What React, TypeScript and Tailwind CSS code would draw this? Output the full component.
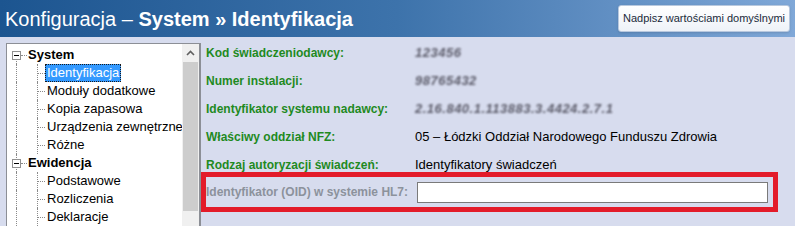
import React from "react";

type TreeGroup = {
  label: string;
  children: string[];
  selected?: string;
};

const tree: TreeGroup[] = [
  {
    label: "System",
    children: ["Identyfikacja", "Moduły dodatkowe", "Kopia zapasowa", "Urządzenia zewnętrzne", "Różne"],
    selected: "Identyfikacja",
  },
  {
    label: "Ewidencja",
    children: ["Podstawowe", "Rozliczenia", "Deklaracje"],
  },
];

const fields = [
  { label: "Kod świadczeniodawcy:", blurred: "123456" },
  { label: "Numer instalacji:", blurred: "98765432" },
  { label: "Identyfikator systemu nadawcy:", blurred: "2.16.840.1.113883.3.4424.2.7.1" },
  { label: "Właściwy oddział NFZ:", value: "05 – Łódzki Oddział Narodowego Funduszu Zdrowia" },
  { label: "Rodzaj autoryzacji świadczeń:", value: "Identyfikatory świadczeń" },
];

function RootRow({ label, first }: { label: string; first?: boolean }) {
  return (
    <div className="flex h-[18px] items-center">
      <div className="relative h-full w-[21px] shrink-0">
        <div
          className={
            first
              ? "absolute left-[9px] top-[9px] bottom-0 border-l border-dotted border-[#8a8a8a]"
              : "absolute left-[9px] top-0 bottom-0 border-l border-dotted border-[#8a8a8a]"
          }
        />
        <div className="absolute left-[14px] top-[9px] w-[6px] border-t border-dotted border-[#8a8a8a]" />
        <div className="absolute left-[5px] top-[5px] flex size-[9px] items-center justify-center border border-[#919191] bg-white">
          <div className="h-px w-[5px] bg-black" />
        </div>
      </div>
      <span className="whitespace-nowrap text-[13px] font-bold text-black">{label}</span>
    </div>
  );
}

function ChildRow({ label, selected }: { label: string; selected?: boolean }) {
  return (
    <div className="flex h-[18px] items-center">
      <div className="h-full w-[30px] shrink-0 pl-[9px]">
        <div className="h-full border-l border-dotted border-[#8a8a8a]" />
      </div>
      <div className="relative h-full w-[8px] shrink-0">
        <div className="absolute inset-y-0 left-0 border-l border-dotted border-[#8a8a8a]" />
        <div className="absolute left-0 top-[9px] w-[8px] border-t border-dotted border-[#8a8a8a]" />
      </div>
      <span
        className={
          selected
            ? "whitespace-nowrap border border-dotted border-[#1a1a1a] bg-[#3399ff] px-px text-[13px] leading-[16px] text-white"
            : "whitespace-nowrap px-[2px] text-[13px] leading-[16px] text-black"
        }
      >
        {label}
      </span>
    </div>
  );
}

function TreePanel() {
  return (
    <div className="ml-[6px] mt-[6px] flex h-[190px] w-[195px] shrink-0 border border-r-2 border-b-0 border-[#8c8f96] bg-white">
      <div className="flex-1 overflow-hidden pt-[2px]">
        {tree.map((g, gi) => (
          <div key={g.label}>
            <RootRow label={g.label} first={gi === 0} />
            {g.children.map((c) => (
              <ChildRow key={c} label={c} selected={c === g.selected} />
            ))}
          </div>
        ))}
      </div>
      <div className="flex w-[17px] shrink-0 flex-col bg-[#f0f0f0]">
        <div className="flex h-[18px] items-center justify-center">
          <svg width="9" height="6" viewBox="0 0 9 6">
            <path d="M1 5 L4.5 1.5 L8 5" fill="none" stroke="#606060" strokeWidth="1.6" />
          </svg>
        </div>
        <div className="mx-px h-[149px] bg-[#cdcdcd]" />
      </div>
    </div>
  );
}

export default function App() {
  return (
    <div
      className="h-[226px] w-[795px] overflow-hidden bg-[#d7dcee]"
      style={{ fontFamily: '"Liberation Sans", Arial, sans-serif' }}
    >
      <header className="flex h-[37px] items-center justify-between bg-gradient-to-r from-[#1c5590] via-[#3d73ab] to-[#80a8d8] pl-[5px] pr-[5px]">
        <h1 className="text-[20px] leading-none text-white">
          <span className="font-normal">Konfiguracja – </span>
          <span className="font-bold">System » Identyfikacja</span>
        </h1>
        <button className="h-[27px] rounded-[3px] border border-[#b8c8de] bg-gradient-to-b from-white to-[#eef2f8] px-[4px] text-[11px] text-[#1a2a3a] shadow-sm">
          Nadpisz wartościami domyślnymi
        </button>
      </header>

      <div className="flex">
        <TreePanel />
        <div className="flex-1 pt-[2px]">
          {fields.map((f) => (
            <div key={f.label} className="flex h-[28px] items-center pl-[5px]">
              <div className="w-[209px] shrink-0 text-[12px] font-bold text-[#1f8a1f]">{f.label}</div>
              {f.value ? (
                <div className="text-[13px] text-black">{f.value}</div>
              ) : (
                <div className="whitespace-nowrap text-[13px] font-bold italic tracking-[0.5px] text-[#5c5c6a] blur-[1.2px]">
                  {f.blurred}
                </div>
              )}
            </div>
          ))}
          <div className="-mt-[7px] flex h-[40px] w-[577px] items-center border-[5px] border-[#e31b2a]">
            <div className="w-[211px] shrink-0 text-[12px] font-bold text-[#8c929c]">
              Identyfikator (OID) w systemie HL7:
            </div>
            <input className="h-[21px] w-[351px] border border-[#7a7a7a] bg-white outline-none" />
          </div>
        </div>
      </div>
    </div>
  );
}
